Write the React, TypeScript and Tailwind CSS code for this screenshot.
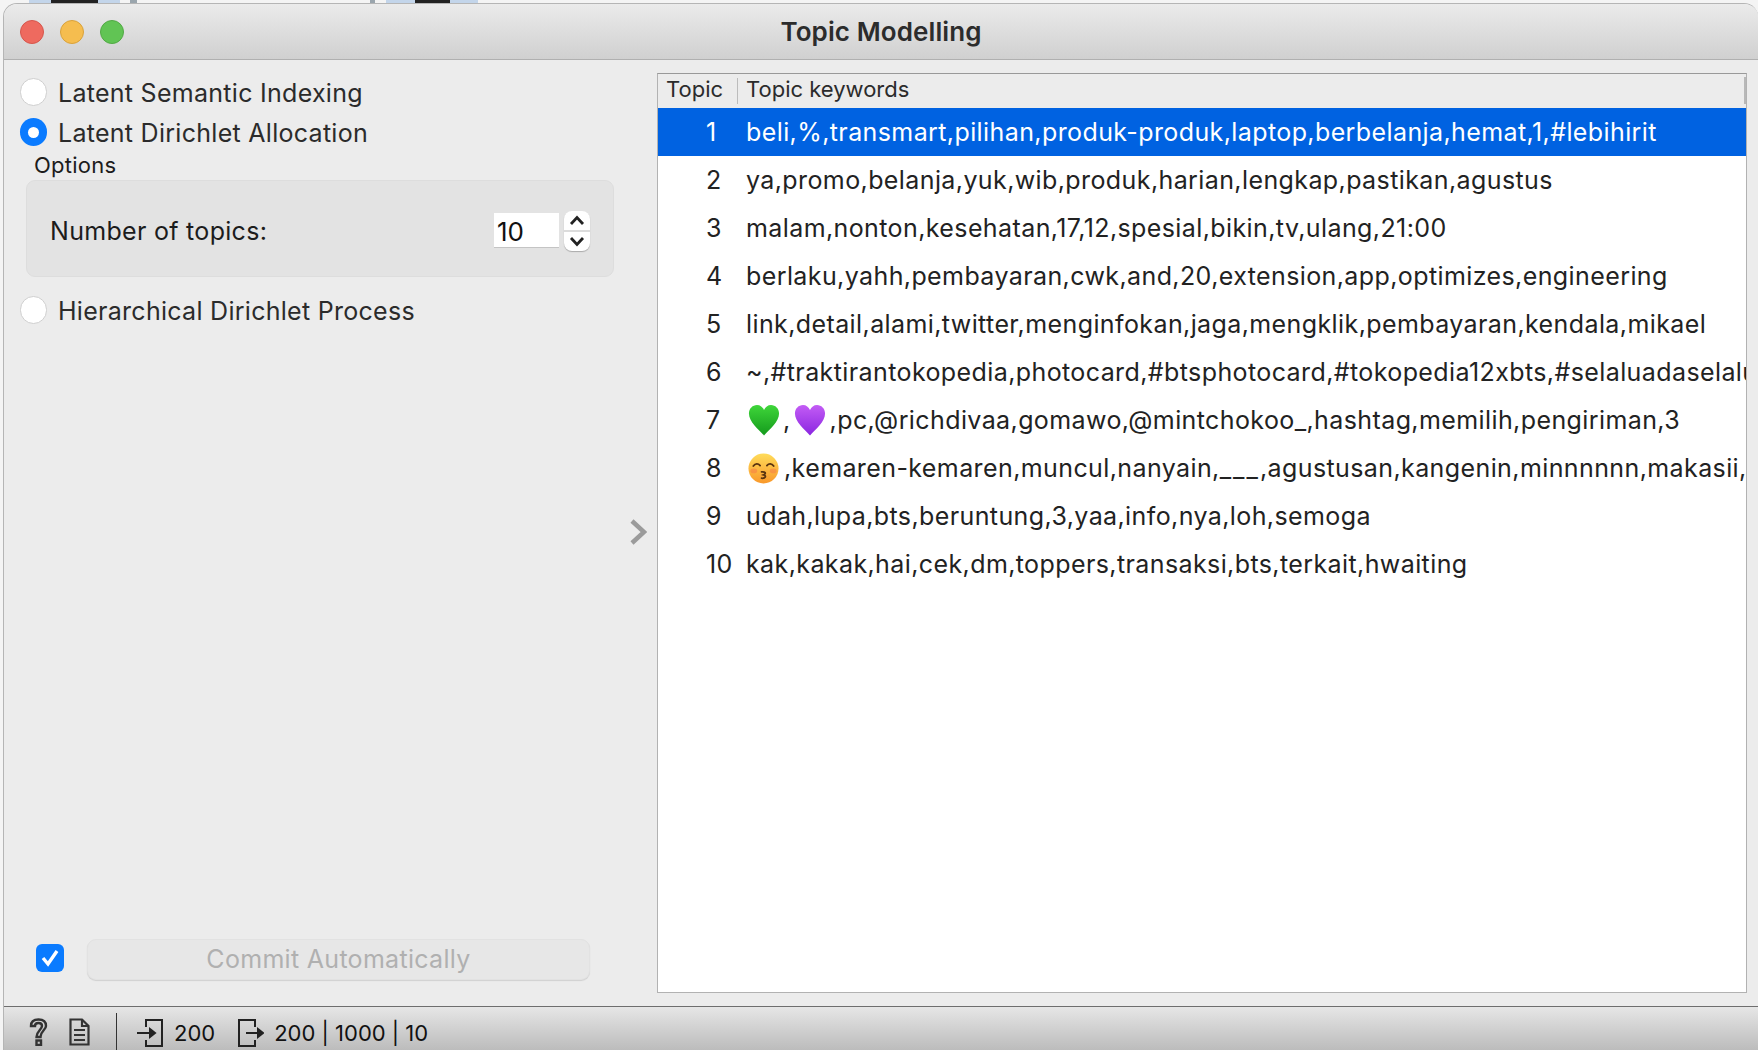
const rows = [
  "beli,%,transmart,pilihan,produk-produk,laptop,berbelanja,hemat,1,#lebihirit",
  "ya,promo,belanja,yuk,wib,produk,harian,lengkap,pastikan,agustus",
  "malam,nonton,kesehatan,17,12,spesial,bikin,tv,ulang,21:00",
  "berlaku,yahh,pembayaran,cwk,and,20,extension,app,optimizes,engineering",
  "link,detail,alami,twitter,menginfokan,jaga,mengklik,pembayaran,kendala,mikael",
  "~,#traktirantokopedia,photocard,#btsphotocard,#tokopedia12xbts,#selaluadaselalu",
  "",
  "",
  "udah,lupa,bts,beruntung,3,yaa,info,nya,loh,semoga",
  "kak,kakak,hai,cek,dm,toppers,transaksi,bts,terkait,hwaiting",
]

function Heart({ from, to }: { from: string; to: string }) {
  const id = "h" + from.slice(1)
  return (
    <svg width="32" height="32" viewBox="0 0 34 32" preserveAspectRatio="none" className="shrink-0">
      <defs>
        <linearGradient id={id} x1="0" y1="0" x2="0" y2="1">
          <stop offset="0" stopColor={from} />
          <stop offset="1" stopColor={to} />
        </linearGradient>
      </defs>
      <path d="M17 31.500C11 25 1 18 1 9.500C1 4.500 5 1 9.500 1C13 1 15.600 3 17 6C18.400 3 21 1 24.500 1C29 1 33 4.500 33 9.500C33 18 23 25 17 31.500Z" fill={`url(#${id})`} />
    </svg>
  )
}

function KissFace() {
  return (
    <svg width="31" height="31" viewBox="0 0 32 32" className="shrink-0">
      <defs>
        <linearGradient id="kf" x1="0" y1="0" x2="0" y2="1">
          <stop offset="0" stopColor="#ffdc5a" />
          <stop offset="1" stopColor="#f9982a" />
        </linearGradient>
      </defs>
      <circle cx="16" cy="16" r="15.500" fill="url(#kf)" />
      <ellipse cx="6" cy="18.500" rx="3.500" ry="2.500" fill="#f4694a" opacity="0.4" />
      <ellipse cx="26" cy="18.500" rx="3.500" ry="2.500" fill="#f4694a" opacity="0.4" />
      <path d="M5.500 13.500C7.500 10.500 10.500 10.500 12.500 13M19.500 13C21.500 10.500 24.500 10.500 26.500 13.500" fill="none" stroke="#5a3410" strokeWidth="1.800" strokeLinecap="round" />
      <path d="M14 19.500C17.500 19 19.500 21 16 22.500C19.500 23.500 18 26.500 14 26" fill="none" stroke="#5a3410" strokeWidth="1.800" strokeLinecap="round" />
    </svg>
  )
}

function Radio({ checked, label }: { checked?: boolean; label: string }) {
  return (
    <div className="flex items-center h-[28px]">
      {checked ? (
        <div className="w-[27px] h-[28px] rounded-full bg-[#0a7bff] flex items-center justify-center shrink-0">
          <div className="w-[11px] h-[11px] rounded-full bg-white" />
        </div>
      ) : (
        <div className="w-[27px] h-[28px] rounded-full bg-white border border-[#cfcfcf] shrink-0" />
      )}
      <span className="ml-[11px] pt-[4px] text-[25px] text-[#2b2b2b] tracking-[0.28px]">{label}</span>
    </div>
  )
}

function InIcon() {
  return (
    <svg width="26" height="28" viewBox="0 0 26 28" fill="none" stroke="#222" strokeWidth="2">
      <path d="M9 8V1H25V27H9V21" />
      <path d="M0 14H17" />
      <path d="M13 10L18 14L13 18Z" fill="#222" />
    </svg>
  )
}

function OutIcon() {
  return (
    <svg width="26" height="28" viewBox="0 0 26 28" fill="none" stroke="#222" strokeWidth="2">
      <path d="M17 8V1H1V27H17V21" />
      <path d="M8 14H21" />
      <path d="M20 10L25 14L20 18Z" fill="#222" />
    </svg>
  )
}

export default function App() {
  return (
    <div className="w-[1758px] h-[1050px] bg-[#f4f4f4] flex flex-col overflow-hidden font-['Inter',sans-serif]">
      <div className="h-[3px] flex shrink-0">
        <div className="ml-[29px] w-[91px] bg-[#c3d5ea] flex justify-center"><div className="w-[47px] bg-[#222]" /></div>
        <div className="ml-[10px] w-[7px] bg-[#9aa5ad]" />
        <div className="ml-[233px] w-[5px] bg-[#9aa5ad]" />
        <div className="ml-[11px] w-[92px] bg-[#c3d5ea] flex justify-center"><div className="w-[35px] bg-[#222]" /></div>
      </div>
      <div className="flex-1 min-h-0 flex flex-col ml-[3px] rounded-t-[14px] border-l border-t border-[#b5b5b5] overflow-hidden">
        <div className="h-[56px] shrink-0 relative flex items-center justify-center bg-gradient-to-b from-[#ebebeb] to-[#d0d0d0] border-b border-[#b0b0b0]">
          <div className="absolute left-[16px] top-[16px] flex gap-[16px]">
            <div className="w-[24px] h-[24px] rounded-full bg-[#ee6a5f] border border-[#d6564c]" />
            <div className="w-[24px] h-[24px] rounded-full bg-[#f5bd4f] border border-[#d9a23b]" />
            <div className="w-[24px] h-[24px] rounded-full bg-[#61c454] border border-[#52a945]" />
          </div>
          <span className="text-[26px] font-semibold text-[#2c2c2c] tracking-[0.1px]">Topic Modelling</span>
        </div>

        <div className="flex-1 min-h-0 flex bg-[#ececec]">
          <div className="w-[617px] shrink-0 flex flex-col pl-[16px] pt-[18px] pb-[26px]">
            <Radio label="Latent Semantic Indexing" />
            <div className="mt-[12px]"><Radio checked label="Latent Dirichlet Allocation" /></div>
            <div className="ml-[14px] mt-[4px] text-[22px] leading-[30px] text-[#1c1c1c] tracking-[0.25px]">Options</div>
            <div className="ml-[6px] w-[588px] h-[97px] rounded-[9px] bg-[#e3e3e3] border border-[#dddddd] flex items-center pl-[23px] shrink-0">
              <span className="text-[25px] text-[#1c1c1c] w-[444px] tracking-[0.3px] mt-[7px]">Number of topics:</span>
              <div className="w-[65px] h-[35px] bg-white border-b border-[#c4c4c4] flex items-center pl-[3px] pt-[2px] text-[26px] text-[#111] mt-[4px]">10</div>
              <div className="ml-[5px] w-[26px] h-[40px] rounded-[8px] bg-white shadow-[0_1px_1px_rgba(0,0,0,0.25)] flex flex-col mt-[5px]">
                <div className="flex-1 flex items-center justify-center border-b-2 border-[#dcdcdc]">
                  <svg width="16" height="11" viewBox="0 0 16 11" fill="none" stroke="#222" strokeWidth="2.800"><path d="M2 9L8 2.500L14 9" /></svg>
                </div>
                <div className="flex-1 flex items-center justify-center">
                  <svg width="16" height="11" viewBox="0 0 16 11" fill="none" stroke="#222" strokeWidth="2.800"><path d="M2 2L8 8.500L14 2" /></svg>
                </div>
              </div>
            </div>
            <div className="mt-[19px]"><Radio label="Hierarchical Dirichlet Process" /></div>
            <div className="mt-auto flex items-center ml-[16px]">
              <div className="w-[28px] h-[28px] rounded-[6px] bg-[#0a7bff] flex items-center justify-center -mt-[3px]">
                <svg width="20" height="18" viewBox="0 0 20 18" fill="none" stroke="#fff" strokeWidth="3.400"><path d="M3 9L8 15L17 2" /></svg>
              </div>
              <div className="ml-[23px] w-[503px] h-[41px] rounded-[9px] bg-[#e7e7e7] border border-[#e2e2e2] shadow-[0_1px_1px_rgba(0,0,0,0.12)] flex items-center justify-center text-[25px] text-[#b0b0b0] tracking-[0.3px]">
                Commit Automatically
              </div>
            </div>
          </div>

          <div className="w-[36px] shrink-0 flex items-center justify-center pr-[3px] pb-[2px]">
            <svg width="18" height="26" viewBox="0 0 18 26" fill="none" stroke="#9b9b9b" strokeWidth="4.500"><path d="M3 2L15 13L3 24" /></svg>
          </div>

          <div className="w-[1090px] shrink-0 mt-[13px] mb-[13px] bg-white border border-[#b2b2b2] border-t-[#999] flex flex-col overflow-hidden">
            <div className="h-[34px] shrink-0 bg-[#ececec] flex items-center text-[22px] text-[#2b2b2b] relative">
              <span className="ml-[8px] w-[71px] -mt-[4px]">Topic</span>
              <div className="w-px h-[26px] bg-[#bcbcbc]" />
              <span className="ml-[8px] -mt-[4px]">Topic keywords</span>
              <div className="absolute right-0 top-[3px] w-[2px] h-[27px] bg-[#b8b8b8]" />
            </div>
            {rows.map((text, i) => (
              <div key={i} className={`h-[48px] shrink-0 flex items-center whitespace-nowrap overflow-hidden text-[25px] tracking-[0.4px] ${i === 0 ? "bg-[#0062e1] text-white" : "text-[#222]"}`}>
                <span className="ml-[48px] w-[40px] shrink-0 pt-[2px]">{i + 1}</span>
                {i === 6 && (
                  <>
                    <span className="ml-[2px] flex"><Heart from="#3fd63a" to="#149a1c" /></span>
                    <span className="mx-[3px] pt-[2px]">,</span>
                    <Heart from="#c35cf5" to="#8a26e0" />
                    <span className="ml-[4px] pt-[2px]">,pc,@richdivaa,gomawo,@mintchokoo_,hashtag,memilih,pengiriman,3</span>
                  </>
                )}
                {i === 7 && (
                  <>
                    <span className="ml-[2px] flex"><KissFace /></span>
                    <span className="ml-[5px] pt-[2px]">,kemaren-kemaren,muncul,nanyain,<span className="tracking-[2px]">___</span>,agustusan,kangenin,minnnnnn,makasii,</span>
                  </>
                )}
                {i !== 6 && i !== 7 && <span className="pt-[2px]">{text}</span>}
              </div>
            ))}
          </div>
        </div>

        <div className="h-[44px] shrink-0 flex items-center bg-gradient-to-b from-[#e6e6e6] to-[#bcbcbc] border-t border-[#6e6e6e] text-[22px] text-[#111]">
          <svg className="ml-[25px] mt-[6px]" width="19" height="28" viewBox="0 0 19 28" fill="none" stroke="#333" strokeWidth="2.400">
            <path d="M2 8C2 3.500 5 1.500 9.500 1.500C14 1.500 17 3.500 17 8C17 12 11.500 13 11.500 19H7.500C7.500 13 13 11.500 13 8C13 6 11.500 5 9.500 5C7.500 5 6 6 6 8Z" />
            <rect x="7.500" y="22.500" width="4.500" height="4.500" />
          </svg>
          <svg className="ml-[21px] mt-[6px]" width="21" height="28" viewBox="0 0 21 28" fill="none" stroke="#333" strokeWidth="2.200">
            <path d="M1.500 1.500H13L19.500 8V26.500H1.500Z" />
            <path d="M13 1.500V8H19.500M5 12H16M5 17H16M5 22H16" />
          </svg>
          <div className="ml-[26px] mt-[6px] w-px h-[38px] bg-[#333]" />
          <div className="ml-[20px] mt-[8px] flex items-center">
            <InIcon />
            <span className="ml-[11px] pt-[2px]">200</span>
          </div>
          <div className="ml-[23px] mt-[8px] flex items-center">
            <OutIcon />
            <span className="ml-[10px] pt-[2px]">200 | 1000 | 10</span>
          </div>
        </div>
      </div>
    </div>
  )
}
